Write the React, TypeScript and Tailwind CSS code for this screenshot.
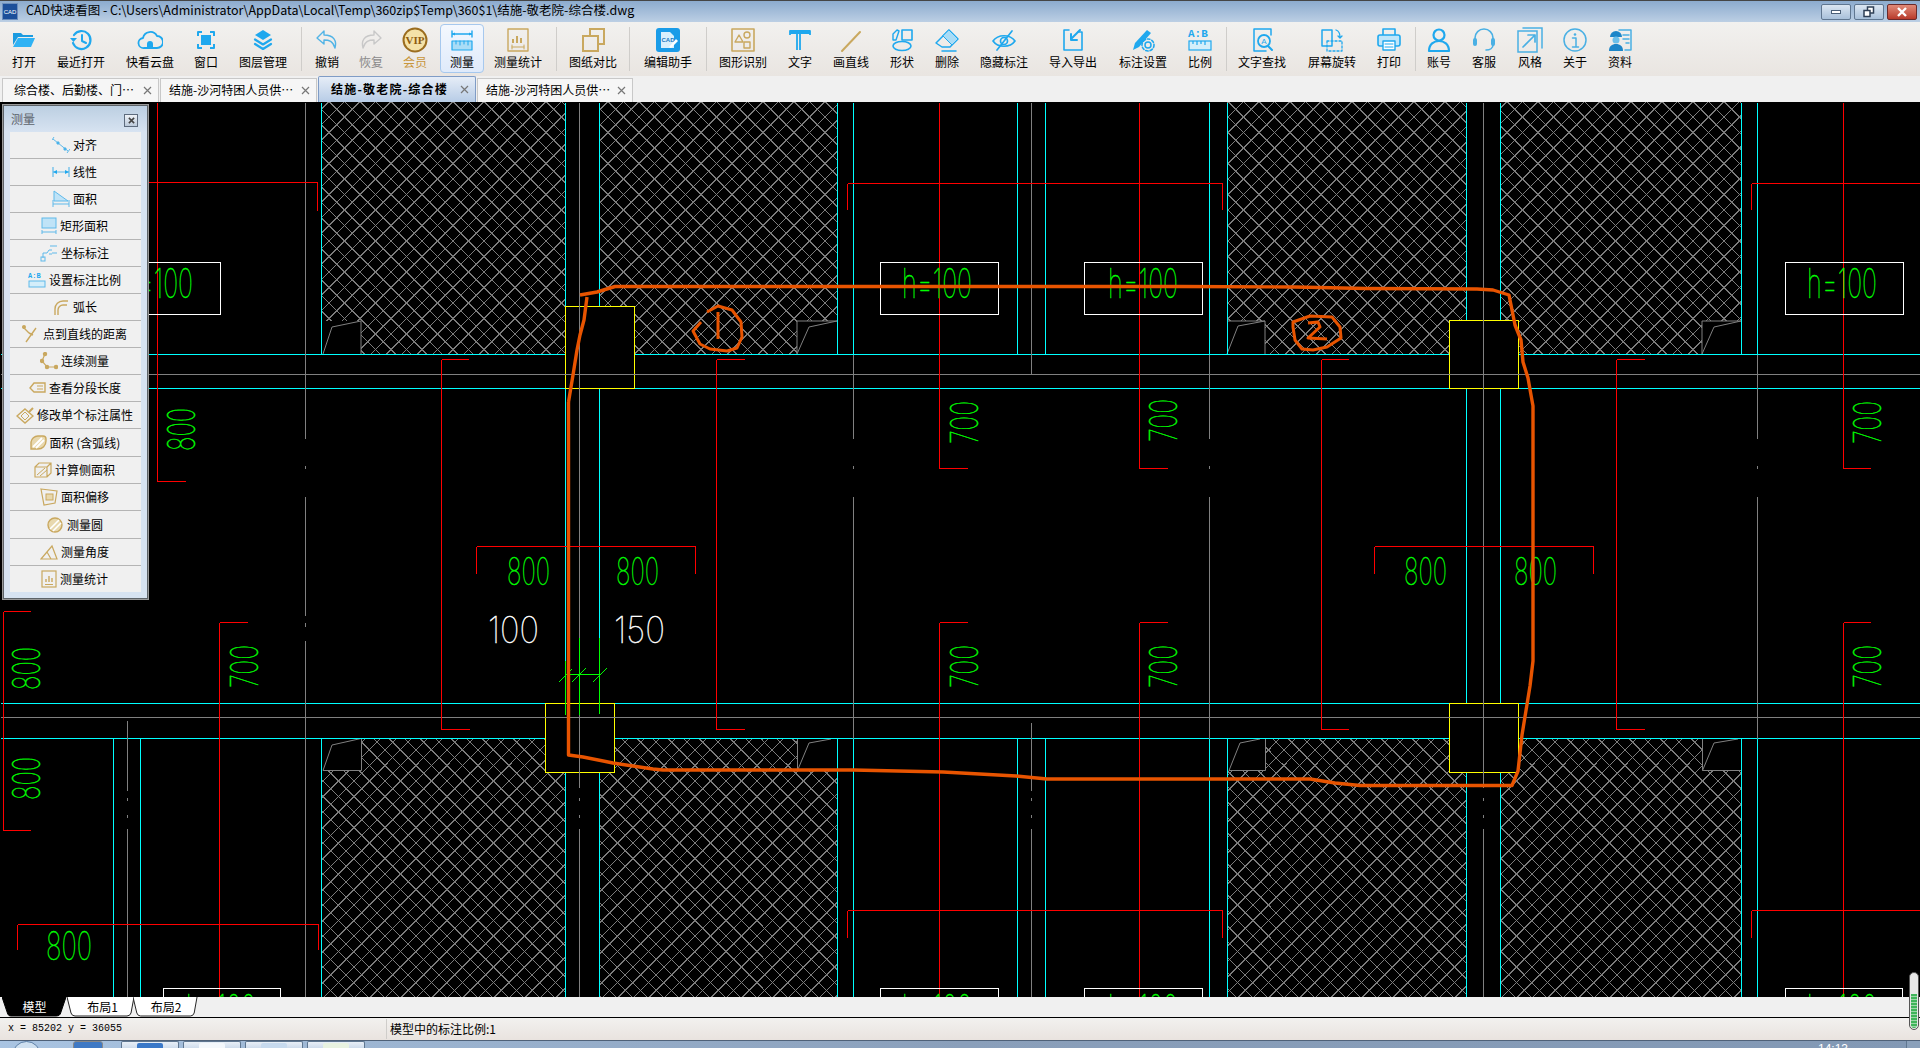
import React from "react";

const B = "#1fa8ee";
const G = "#c9a85f";

type IcProps = { s?: number; children: React.ReactNode; vb?: string };
const Ic = ({ s = 26, vb = "0 0 26 26", children }: IcProps) => (
  <svg width={s} height={s} viewBox={vb} fill="none" stroke={B} strokeWidth={1.6} strokeLinecap="round" strokeLinejoin="round">
    {children}
  </svg>
);

const icons: Record<string, React.ReactNode> = {
  open: (
    <Ic>
      <path d="M2 18V6h8l2 2h10v2H7z" fill="#1b9be0" stroke="none" />
      <path d="M2 20 7 11h17l-4 9z" fill="#2fb2f4" stroke="none" />
    </Ic>
  ),
  recent: (
    <Ic>
      <path d="M6 8a9 9 0 1 1-1 8" strokeWidth={2.2} />
      <path d="M2 11h7l-3.500 4z" fill={B} stroke="none" />
      <path d="M14 8v6l4 2" strokeWidth={2} />
    </Ic>
  ),
  cloud: (
    <Ic>
      <path d="M7 21a5 5 0 0 1-1-10 7.500 7.500 0 0 1 14-2 6 6 0 0 1 0 12z" strokeWidth={1.8} />
      <path d="M10 21v-4a3 3 0 0 1 6 0v4z" fill={B} stroke="none" />
    </Ic>
  ),
  window: (
    <Ic>
      <path d="M5 9V5h4M17 5h4v4M21 17v4h-4M9 21H5v-4" strokeWidth={2} strokeLinecap="butt" />
      <rect x="8" y="8" width="10" height="10" fill={B} stroke="none" />
    </Ic>
  ),
  layers: (
    <Ic>
      <path d="M13 3 21 8l-8 5-8-5z" fill={B} stroke="none" />
      <path d="M5 12.500l8 5 8-5M5 17l8 5 8-5" strokeWidth={2.200} />
    </Ic>
  ),
  undo: (
    <Ic>
      <path d="M10 4 3 11l7 6v-4c5 0 9 1 11 8 2-7-1-13-11-13z" stroke="#52b4e6" strokeWidth={1.4} />
    </Ic>
  ),
  redo: (
    <Ic>
      <path d="M16 4l7 7-7 6v-4C11 13 7 14 5 21 3 14 6 8 16 8z" stroke="#c8c8c8" strokeWidth={1.4} />
    </Ic>
  ),
  vip: (
    <svg width="26" height="26" viewBox="0 0 26 26">
      <circle cx="13" cy="13" r="11.500" fill="#f4e2a8" stroke="#9b6d1f" strokeWidth="2" />
      <text x="13" y="17" textAnchor="middle" fontFamily="Liberation Serif" fontWeight="700" fontSize="11" fill="#8d5c10">VIP</text>
    </svg>
  ),
  measure: (
    <Ic>
      <path d="M3 7h20M3 4v6M23 4v6" strokeWidth={1.4} />
      <path d="M3 7l3-1.500v3zM23 7l-3-1.500v3z" fill={B} stroke="none" />
      <rect x="3" y="14" width="20" height="9" fill="#a9dcf6" strokeWidth={1.2} />
      <path d="M7 14v3M11 14v4M15 14v3M19 14v4" strokeWidth={1} />
    </Ic>
  ),
  mstat: (
    <Ic>
      <g stroke={G}>
        <rect x="3" y="2" width="20" height="22" strokeWidth={1.4} />
        <path d="M8 12v4M12 9v7M16 11v5" strokeWidth={2} strokeLinecap="butt" />
        <path d="M7 20h12M7 18v4M19 18v4" strokeWidth={1} />
      </g>
    </Ic>
  ),
  compare: (
    <Ic>
      <g stroke={G} strokeWidth={2} strokeLinecap="butt" strokeLinejoin="miter">
        <path d="M10 9V2h14v15h-6" />
        <rect x="3" y="9" width="15" height="15" />
      </g>
    </Ic>
  ),
  helper: (
    <svg width="26" height="26" viewBox="0 0 26 26">
      <rect x="1" y="1" width="24" height="24" rx="3" fill="#1a9ce8" />
      <path d="M6 5h9l4 4v12H6z" fill="#d9f0fc" />
      <text x="6.500" y="15" fontFamily="Liberation Sans" fontWeight="700" fontSize="6" fill="#1a78c0">CAD</text>
      <path d="M14 20l7-8 2 2-7 7z" fill="#fff" />
    </svg>
  ),
  recog: (
    <Ic>
      <g stroke={G} strokeWidth={1.4}>
        <rect x="2" y="2" width="22" height="22" strokeWidth={1.6} />
        <path d="M9 8l4 7H5z" />
        <circle cx="17" cy="8" r="3" />
        <rect x="14" y="15" width="6" height="6" />
      </g>
    </Ic>
  ),
  text: (
    <Ic>
      <path d="M3 8V4h20v4M3 6h20M13 6v17M10 6v17" strokeWidth={1.800} strokeLinecap="butt" />
    </Ic>
  ),
  line: (
    <Ic>
      <path d="M4 24 22 5" stroke={G} strokeWidth={2} />
    </Ic>
  ),
  shape: (
    <Ic>
      <rect x="13" y="3" width="10" height="10" strokeWidth={1.600} />
      <ellipse cx="13" cy="19" rx="9" ry="4.500" strokeWidth={1.600} />
      <path d="M4 13V7l4-4 2 1-3 9z" strokeWidth={1.400} />
    </Ic>
  ),
  eraser: (
    <Ic>
      <path d="M2 16 15 3l9 9-8 8H8z" strokeWidth={1.500} />
      <path d="M9 9l9 9 6-6-9-9z" fill="#a9dcf6" strokeWidth={1} />
      <path d="M8 24h14" strokeWidth={1.500} />
    </Ic>
  ),
  eye: (
    <Ic>
      <path d="M2 14c5-7 17-7 22 0-5 7-17 7-22 0z" strokeWidth={1.700} />
      <circle cx="13" cy="14" r="3.500" strokeWidth={1.700} />
      <path d="M6 23 21 4" strokeWidth={1.700} />
    </Ic>
  ),
  imp: (
    <Ic>
      <path d="M9 3H4v20h18V5h-4" strokeWidth={1.600} />
      <path d="M20 3 11 12M11 7v6h6" strokeWidth={2} />
    </Ic>
  ),
  dimset: (
    <Ic>
      <path d="M3 23l2-7L17 3l4 3L9 20z" fill={B} stroke="none" />
      <circle cx="18" cy="18" r="3" strokeWidth={1.500} />
      <circle cx="18" cy="18" r="6" strokeWidth={1.600} strokeDasharray="2.500 2" />
    </Ic>
  ),
  ratio: (
    <svg width="26" height="26" viewBox="0 0 26 26">
      <text x="1" y="10" fontFamily="Liberation Mono" fontWeight="700" fontSize="11" fill={B}>A:B</text>
      <g fill="none" stroke={B} strokeWidth="1.200">
        <rect x="2" y="14" width="22" height="9" fill="#d4eefa" />
        <path d="M6 14v3M10 14v4M14 14v3M18 14v4" />
      </g>
    </svg>
  ),
  find: (
    <Ic>
      <path d="M5 2h17v6M5 2v22h12" strokeWidth={1.500} />
      <circle cx="15" cy="14" r="6" strokeWidth={1.800} />
      <path d="M19 19l4 4" strokeWidth={2} />
      <text x="12.200" y="17" fontFamily="Liberation Sans" fontSize="8" fill={B} stroke="none">A</text>
    </Ic>
  ),
  rotate: (
    <Ic>
      <rect x="3" y="3" width="10" height="16" strokeWidth={1.500} />
      <rect x="8" y="14" width="15" height="10" strokeWidth={1.300} strokeDasharray="2 2" />
      <path d="M17 3c3 1 4 3 4 7M19 9l2 2 2-2" strokeWidth={1.300} />
    </Ic>
  ),
  print: (
    <Ic>
      <path d="M7 8V2h12v6" strokeWidth={1.600} />
      <rect x="2" y="8" width="22" height="11" rx="2" strokeWidth={1.600} fill="#bfe6fa" />
      <rect x="7" y="14" width="12" height="9" fill="#fff" strokeWidth={1.400} />
      <path d="M9 17h8M9 20h8" strokeWidth={1} />
    </Ic>
  ),
  user: (
    <Ic>
      <circle cx="13" cy="8" r="5.500" strokeWidth={2.200} />
      <path d="M3 24c0-7 5-10 10-10s10 3 10 10z" strokeWidth={2.200} />
    </Ic>
  ),
  head: (
    <Ic>
      <path d="M4 15V11a9 9 0 0 1 18 0v4M22 18c0 3-3 5-7 5" stroke="#4ab0e4" strokeWidth={1.600} />
      <rect x="2" y="11" width="4" height="8" rx="2" fill="#4ab0e4" stroke="none" />
      <rect x="20" y="11" width="4" height="8" rx="2" fill="#4ab0e4" stroke="none" />
    </Ic>
  ),
  style: (
    <Ic>
      <path d="M6 1h19v20M1 4h19v21H1z" stroke="#4ab0e4" strokeWidth={1.500} strokeLinejoin="miter" />
      <path d="M6 20 18 8M11 8h7v7" stroke="#4ab0e4" strokeWidth={1.700} />
    </Ic>
  ),
  about: (
    <Ic>
      <circle cx="13" cy="13" r="11" stroke="#4ab0e4" strokeWidth={1.500} />
      <circle cx="13" cy="7.500" r="1.300" fill="#4ab0e4" stroke="none" />
      <path d="M10.500 11H14v8M10.500 20h6" stroke="#4ab0e4" strokeWidth={1.500} />
    </Ic>
  ),
  data: (
    <Ic>
      <path d="M12 3h12v20h-6" stroke="#4ab0e4" strokeWidth={1.500} />
      <path d="M16 8h6M16 12h6M19 16h3" stroke="#4ab0e4" strokeWidth={1.500} />
      <path d="M3 10a6 6 0 0 1 12 0z" fill="#1d86c8" stroke="none" />
      <circle cx="9" cy="13" r="3.500" fill="#6cc0ea" stroke="none" />
      <path d="M2 24c0-5 3-7 7-7s7 2 7 7z" fill="#1d86c8" stroke="none" />
    </Ic>
  ),
};

type Tool = { label: string; w: string; icon: string; sep?: string; active?: boolean; color?: string };
const tools: Tool[] = [
  { label: "打开", w: "w-[48px]", icon: "open" },
  { label: "最近打开", w: "w-[66px]", icon: "recent" },
  { label: "快看云盘", w: "w-[72px]", icon: "cloud" },
  { label: "窗口", w: "w-[40px]", icon: "window" },
  { label: "图层管理", w: "w-[74px]", icon: "layers", sep: "ml-[1px]" },
  { label: "撤销", w: "w-[50px]", icon: "undo" },
  { label: "恢复", w: "w-[38px]", icon: "redo", color: "text-[#8a8a8a]" },
  { label: "会员", w: "w-[50px]", icon: "vip", color: "text-[#c8963c]" },
  { label: "测量", w: "w-[44px]", icon: "measure", active: true },
  { label: "测量统计", w: "w-[68px]", icon: "mstat", sep: "ml-[4px]" },
  { label: "图纸对比", w: "w-[72px]", icon: "compare", sep: "ml-[0px]" },
  { label: "编辑助手", w: "w-[76px]", icon: "helper", sep: "ml-[0px]" },
  { label: "图形识别", w: "w-[72px]", icon: "recog" },
  { label: "文字", w: "w-[42px]", icon: "text" },
  { label: "画直线", w: "w-[60px]", icon: "line" },
  { label: "形状", w: "w-[42px]", icon: "shape" },
  { label: "删除", w: "w-[48px]", icon: "eraser" },
  { label: "隐藏标注", w: "w-[66px]", icon: "eye" },
  { label: "导入导出", w: "w-[72px]", icon: "imp" },
  { label: "标注设置", w: "w-[68px]", icon: "dimset" },
  { label: "比例", w: "w-[46px]", icon: "ratio", sep: "ml-[3px]" },
  { label: "文字查找", w: "w-[70px]", icon: "find" },
  { label: "屏幕旋转", w: "w-[70px]", icon: "rotate" },
  { label: "打印", w: "w-[44px]", icon: "print", sep: "ml-[4px]" },
  { label: "账号", w: "w-[46px]", icon: "user" },
  { label: "客服", w: "w-[44px]", icon: "head" },
  { label: "风格", w: "w-[48px]", icon: "style" },
  { label: "关于", w: "w-[42px]", icon: "about" },
  { label: "资料", w: "w-[48px]", icon: "data" },
];

const cjk = "font-['Noto_Sans_CJK_SC',sans-serif]";

const Toolbar = () => (
  <div className="flex h-[54px] items-stretch bg-gradient-to-b from-[#f2f1ef] to-[#e9e5e1]">
    {tools.map((t) => (
      <React.Fragment key={t.label}>
        <div className={`${t.w} flex flex-col items-center pt-[5px] shrink-0 relative`}>
          {t.active && (
            <div className="absolute left-0 right-0 top-[2px] bottom-[3px] rounded-[4px] border border-[#a6c8ee] bg-gradient-to-b from-[#f4f8fe] to-[#dfeafa]" />
          )}
          <div className="relative h-[26px] flex items-center justify-center">{icons[t.icon]}</div>
          <div className={`relative mt-[1px] leading-[16px] text-[12px] whitespace-nowrap ${t.color ?? "text-black"}`}>{t.label}</div>
        </div>
        {t.sep && <div className={`${t.sep} w-[1px] my-[5px] bg-[#cfcdca] shrink-0`} />}
      </React.Fragment>
    ))}
  </div>
);

const WinBtn = ({ close, children }: { close?: boolean; children: React.ReactNode }) => (
  <div
    className={`w-[30px] h-[16px] rounded-[2px] border flex items-center justify-center ${
      close
        ? "border-[#6b2a2a] bg-gradient-to-b from-[#e08a78] to-[#b8392a]"
        : "border-[#5f7690] bg-gradient-to-b from-[#dbe6f2] to-[#a8c0da]"
    }`}
  >
    {children}
  </div>
);

const TitleBar = () => (
  <div className="h-[22px] border-t-[1px] border-[#454545] bg-gradient-to-b from-[#8cabce] to-[#bccfe4] flex items-center pl-[2px] pr-[3px]">
    <div className="w-[16px] h-[17px] bg-[#1c4f9a] border border-[#6d8fbd] flex items-center justify-center shrink-0">
      <span className="text-[6px] leading-none text-white font-['Liberation_Sans',sans-serif]">CAD</span>
    </div>
    <span className="ml-[8px] text-[12.5px] leading-none text-black whitespace-nowrap -mt-[2px]">
      CAD快速看图 - C:\Users\Administrator\AppData\Local\Temp\360zip$Temp\360$1\结施-敬老院-综合楼.dwg
    </span>
    <div className="ml-auto flex gap-[3px]">
      <WinBtn>
        <div className="w-[10px] h-[4px] bg-white border border-[#4a5f78]" />
      </WinBtn>
      <WinBtn>
        <svg width="12" height="12" viewBox="0 0 12 12" fill="none" stroke="#2e3f55" strokeWidth="1.500">
          <rect x="4.500" y="1" width="6" height="6" fill="#fff" />
          <rect x="1" y="4.500" width="6" height="6" fill="#fff" />
        </svg>
      </WinBtn>
      <WinBtn close>
        <svg width="12" height="10" viewBox="0 0 12 10" fill="none" stroke="#fff" strokeWidth="2.400">
          <path d="M2 1l8 8M10 1 2 9" />
        </svg>
      </WinBtn>
    </div>
  </div>
);

const tabs = [
  { t: "综合楼、后勤楼、门…", w: "w-[157px]", pl: "pl-[11px]" },
  { t: "结施-沙河特困人员供…", w: "w-[157px]", pl: "pl-[8px]" },
  { t: "结施-敬老院-综合楼", w: "w-[158px]", pl: "pl-[12px]", active: true },
  { t: "结施-沙河特困人员供…", w: "w-[156px]", pl: "pl-[8px]" },
];

const TabStrip = () => (
  <div className="h-[26px] bg-[#f0f0f0] flex items-end pl-[2px] gap-[1px]">
    {tabs.map((t, i) => (
      <div
        key={i}
        className={`${t.w} ${t.pl} flex items-center justify-between pr-[6px] pb-[1px] border border-b-0 ${
          t.active
            ? "h-[26px] rounded-t-[2px] border-[#7f9cc6] bg-gradient-to-b from-[#e6edf7] to-[#b7cce6] font-bold tracking-[1.2px]"
            : "h-[24px] border-[#c8c8c8] bg-[#f6f6f6]"
        }`}
      >
        <span className="text-[12px] leading-none text-black whitespace-nowrap">{t.t}</span>
        <svg width="9" height="9" viewBox="0 0 9 9" stroke="#777" strokeWidth="1.200">
          <path d="M1 1l7 7M8 1 1 8" />
        </svg>
      </div>
    ))}
  </div>
);

/* ---------- CAD drawing ---------- */
type Seg = number[];
const hatches = [
  [321, 102, 244, 252, 0],
  [599, 102, 238, 252, 0],
  [1227, 102, 239, 252, 0],
  [1500, 102, 241, 252, 0],
  [321, 738, 244, 259, 1],
  [599, 738, 238, 259, 1],
  [1227, 738, 239, 259, 1],
  [1500, 738, 241, 259, 1],
];
const PITCH = 15.5;
/* A drawn cross-hatch: two families of diagonals through a known node, cut to the rectangle by a clip path. */
const Hatch = ({ h, id }: { h: number[]; id: string }) => {
  const [x, y, w, ht, lower] = h;
  const nx = lower ? 1268.3 : 336.7;
  const ny = lower ? 750 : 109.3;
  const lines: React.ReactNode[] = [];
  const a0 = nx - ny;
  const b0 = nx + ny;
  const aMin = x - (y + ht);
  const aMax = x + w - y;
  const bMin = x + y;
  const bMax = x + w + y + ht;
  for (let k = Math.floor((aMin - a0) / PITCH); k <= Math.ceil((aMax - a0) / PITCH); k++) {
    const a = a0 + k * PITCH;
    lines.push(<line key={`a${k}`} x1={y + a} y1={y} x2={y + ht + a} y2={y + ht} />);
  }
  for (let k = Math.floor((bMin - b0) / PITCH); k <= Math.ceil((bMax - b0) / PITCH); k++) {
    const b = b0 + k * PITCH;
    lines.push(<line key={`b${k}`} x1={b - y} y1={y} x2={b - y - ht} y2={y + ht} />);
  }
  return (
    <g>
      <clipPath id={id}>
        <rect x={x} y={y} width={w} height={ht} />
      </clipPath>
      <g clipPath={`url(#${id})`} stroke="#7c7c7c" strokeWidth="1" shapeRendering="crispEdges">
        {lines}
      </g>
    </g>
  );
};

const cyan: Seg[] = [
  [321, 102, 321, 354], [565, 102, 565, 997], [599, 102, 599, 997], [837, 102, 837, 354], [853, 102, 853, 354],
  [1017, 102, 1017, 354], [1045, 102, 1045, 354], [1209, 102, 1209, 354], [1227, 102, 1227, 354],
  [1466, 102, 1466, 997], [1500, 102, 1500, 997], [1741, 102, 1741, 354], [1757, 102, 1757, 354],
  [321, 738, 321, 997], [837, 738, 837, 997], [853, 738, 853, 997], [1017, 738, 1017, 997], [1045, 738, 1045, 997],
  [1209, 738, 1209, 997], [1227, 738, 1227, 997], [1741, 738, 1741, 997], [1757, 738, 1757, 997],
  [113, 738, 113, 997], [140, 738, 140, 997],
  [0, 354, 1920, 354], [0, 388, 1920, 388], [0, 703, 1920, 703], [0, 738, 1920, 738],
];
const gray: Seg[] = [
  [0, 374, 1920, 374], [0, 717, 1920, 717],
  [305, 102, 305, 438], [305, 465, 305, 468], [305, 496, 305, 615], [305, 622, 305, 626], [305, 640, 305, 997],
  [579, 102, 579, 787], [579, 797, 579, 800], [579, 814, 579, 817], [579, 828, 579, 997],
  [853, 354, 853, 438], [853, 465, 853, 468], [853, 496, 853, 738],
  [1031, 102, 1031, 374], [1031, 722, 1031, 790], [1031, 797, 1031, 800], [1031, 814, 1031, 817], [1031, 828, 1031, 997],
  [1209, 354, 1209, 438], [1209, 465, 1209, 468], [1209, 496, 1209, 738],
  [1483, 102, 1483, 787], [1483, 797, 1483, 800], [1483, 814, 1483, 817], [1483, 828, 1483, 997],
  [1757, 354, 1757, 438], [1757, 465, 1757, 468], [1757, 496, 1757, 738],
  [127, 720, 127, 790], [127, 797, 127, 800], [127, 814, 127, 817], [127, 828, 127, 997],
];
const red: Seg[] = [
  [148, 182, 317, 182], [317, 182, 317, 210],
  [157, 102, 157, 481], [157, 481, 185, 481],
  [847, 183, 1222, 183], [847, 183, 847, 209], [1222, 183, 1222, 209],
  [939, 102, 939, 468], [939, 468, 967, 468],
  [1139, 102, 1139, 468], [1139, 468, 1167, 468],
  [1751, 183, 1920, 183], [1751, 183, 1751, 209],
  [1843, 102, 1843, 468], [1843, 468, 1870, 468],
  [441, 359, 441, 729], [441, 359, 468, 359], [441, 729, 469, 729],
  [716, 359, 716, 729], [716, 359, 744, 359], [716, 729, 744, 729],
  [1321, 359, 1321, 729], [1321, 359, 1348, 359], [1321, 729, 1348, 729],
  [1616, 359, 1616, 729], [1616, 359, 1644, 359], [1616, 729, 1644, 729],
  [476, 546, 695, 546], [476, 546, 476, 573], [695, 546, 695, 573],
  [1374, 546, 1593, 546], [1374, 546, 1374, 573], [1593, 546, 1593, 573],
  [219, 622, 219, 997], [219, 622, 247, 622],
  [939, 622, 939, 997], [939, 622, 967, 622],
  [1139, 622, 1139, 997], [1139, 622, 1167, 622],
  [1843, 622, 1843, 997], [1843, 622, 1870, 622],
  [3, 611, 3, 830], [3, 611, 30, 611], [3, 830, 30, 830],
  [17, 924, 318, 924], [17, 924, 17, 949], [318, 924, 318, 949],
  [847, 910, 1222, 910], [847, 910, 847, 937], [1222, 910, 1222, 937],
  [1751, 910, 1920, 910], [1751, 910, 1751, 937],
];
const whiteBoxes = [
  [100, 262, 120, 52], [880, 262, 118, 52], [1084, 262, 118, 52], [1785, 262, 118, 52],
  [163, 988, 117, 60], [880, 988, 118, 60], [1084, 988, 118, 60], [1785, 988, 117, 60],
];
const yellow = [
  [565, 306, 69, 82],
  [1449, 320, 69, 68],
  [545, 703, 69, 69],
  [1449, 703, 69, 69],
];
const doors = [
  "M361 321H321V354H361Z|M323 354 332 327 361 321M361 321V354",
  "M797 321H837V354H797Z|M797 354V321H837M797 354 809 327 837 321",
  "M1227 321H1265V354H1227Z|M1227 321H1265V354M1227 354 1238 326 1265 321",
  "M1702 321H1741V354H1702Z|M1702 354V321H1741M1702 354 1714 327 1741 321",
  "M321 738H361V771H321Z|M323 770.500 332 745 361 738.500M361.500 738V770.500H323",
  "M797 738H837V771H797Z|M797.500 770.500V738M797.500 770.500 809 743 831 739M797.500 770.500H837",
  "M1227 738H1265V771H1227Z|M1229 770.500 1240 743 1260 739M1265.500 738V770.500H1229",
  "M1702 738H1741V771H1702Z|M1702.500 770.500V738M1702.500 770.500 1714 743 1738 739M1702.500 770.500H1741",
];

const CadText = ({ x, y, w, h, text, color = "#00ff00", rot }: { x: number; y: number; w: number; h: number; text: string; color?: string; rot?: boolean }) => (
  <text
    x={x}
    y={y}
    fontSize={h / 0.727}
    fontFamily="Inter, 'Liberation Sans', sans-serif"
    fontWeight={100}
    fill={color}
    stroke={color}
    strokeWidth={0.45}
    textLength={w}
    lengthAdjust="spacingAndGlyphs"
    transform={rot ? `rotate(-90 ${x} ${y})` : undefined}
  >
    {text}
  </text>
);

const Lines = ({ segs, color, w = 1 }: { segs: Seg[]; color: string; w?: number }) => (
  <g stroke={color} strokeWidth={w} shapeRendering="crispEdges">
    {segs.map((s, i) => (
      <line key={i} x1={s[0] + 0.5} y1={s[1] + 0.5} x2={s[2] + 0.5} y2={s[3] + 0.5} />
    ))}
  </g>
);

const orange = "#e85400";

const Drawing = () => (
  <svg className="absolute inset-0" width="1920" height="895" viewBox="0 102 1920 895">
    <rect x="0" y="102" width="1920" height="895" fill="#000" />
    {hatches.map((h, i) => (
      <Hatch key={i} h={h} id={`hatch${i}`} />
    ))}
    {doors.map((d, i) => {
      const [f, s] = d.split("|");
      return (
        <g key={i}>
          <path d={f} fill="#000" />
          <path d={s} fill="none" stroke="#808080" />
        </g>
      );
    })}
    <Lines segs={cyan} color="#00ffff" />
    {yellow.map((b, i) => (
      <rect key={i} x={b[0] + 0.5} y={b[1] + 0.5} width={b[2]} height={b[3]} fill="#000" stroke="#ffff00" shapeRendering="crispEdges" />
    ))}
    <Lines segs={gray} color="#808080" />
    <Lines
      segs={[
        [565, 660, 565, 714], [579, 637, 579, 714], [599, 637, 599, 713], [565, 674, 599, 674],
      ]}
      color="#00ff00"
    />
    <path d="M559 682 572 669M572 682 586 668M593 682 607 668" stroke="#00ff00" fill="none" />
    <Lines segs={red} color="#ff0000" />
    {whiteBoxes.map((b, i) => (
      <rect key={i} x={b[0] + 0.5} y={b[1] + 0.5} width={b[2]} height={b[3]} fill="none" stroke="#ffffff" shapeRendering="crispEdges" />
    ))}

    <CadText x={123} y={298} w={70} h={30} text="h=100" />
    <CadText x={902} y={298} w={70} h={30} text="h=100" />
    <CadText x={1108} y={298} w={70} h={30} text="h=100" />
    <CadText x={1807} y={298} w={70} h={30} text="h=100" />
    <CadText x={186} y={1024} w={70} h={30} text="h=100" />
    <CadText x={902} y={1024} w={70} h={30} text="h=100" />
    <CadText x={1108} y={1024} w={70} h={30} text="h=100" />
    <CadText x={1807} y={1024} w={70} h={30} text="h=100" />

    <CadText x={507} y={585} w={43} h={28} text="800" />
    <CadText x={616} y={585} w={43} h={28} text="800" />
    <CadText x={1404} y={585} w={43} h={28} text="800" />
    <CadText x={1514} y={585} w={43} h={28} text="800" />
    <CadText x={46} y={960} w={46} h={29} text="800" />

    <CadText x={488} y={643} w={51} h={27} text="100" color="#ffffff" />
    <CadText x={614} y={643} w={51} h={27} text="150" color="#ffffff" />

    <CadText x={195} y={451} w={43} h={28} text="800" rot />
    <CadText x={978} y={444} w={43} h={28} text="700" rot />
    <CadText x={1177} y={442} w={43} h={28} text="700" rot />
    <CadText x={1881} y={444} w={43} h={28} text="700" rot />
    <CadText x={258} y={688} w={43} h={28} text="700" rot />
    <CadText x={978} y={688} w={43} h={28} text="700" rot />
    <CadText x={1177} y={688} w={43} h={28} text="700" rot />
    <CadText x={1881} y={688} w={43} h={28} text="700" rot />
    <CadText x={40} y={690} w={43} h={28} text="800" rot />
    <CadText x={40} y={800} w={43} h={28} text="800" rot />

    <g fill="none" stroke={orange} strokeLinejoin="round">
      <path
        strokeWidth="3.400"
        d="M568.500 402V755L583 757 613 763 653 769 663 770H853L943 772 1016 776 1047 779H1310L1335 783 1360 785.500H1512L1518 771 1522 735 1530 686 1533 661V406L1531 395 1528 378 1523 362 1521 340 1515 325 1509 295 1493 290 1477 289 1365 288.500 1295 287 1180 286.500H615L597 292 580 295"
      />
      <path strokeWidth="3.400" d="M587 297 584 320 580 335 577 350 573 375 568.500 402" />
      <path strokeWidth="3" d="M707 312 718 306 732 310 741 322 742 337 737 348 727 351 710 349 700 344 693 331 701 322" />
      <path strokeWidth="3" d="M718 312V339" />
      <path strokeWidth="3" d="M1293 322 1310 316 1332 317 1340 327 1341 338 1327 347 1313 350 1302 349 1295 340 1293 327Z" />
      <path strokeWidth="3" d="M1308 323 1318 322 1320 327 1308 338 1327 339" />
    </g>
  </svg>
);

/* ---------- measure panel ---------- */
const PI = ({ children, w = 18 }: { children: React.ReactNode; w?: number }) => (
  <svg width={w} height="18" viewBox={`0 0 ${w} 18`} fill="none" stroke="#5fb9ea" strokeWidth="1" className="shrink-0">
    {children}
  </svg>
);
const Bg = ({ children, w = 18 }: { children: React.ReactNode; w?: number }) => (
  <svg width={w} height="18" viewBox={`0 0 ${w} 18`} fill="none" stroke="#c9a85f" strokeWidth="1.400" className="shrink-0">
    {children}
  </svg>
);
const rows: { t: string; h: string; i: React.ReactNode }[] = [
  { t: "对齐", h: "h-[27px]", i: <PI><path d="M1 3 16 15M2 1 0 4M15 17 18 13" /><circle cx="6" cy="7" r="1.200" fill="#1fa8ee" /><circle cx="13" cy="13" r="1.200" fill="#1fa8ee" /></PI> },
  { t: "线性", h: "h-[27px]", i: <PI><path d="M1 4v10M17 4v10M1 9h16" strokeWidth="1.200" /><path d="M1 9l4-2v4zM17 9l-4-2v4z" fill="#1fa8ee" stroke="none" /></PI> },
  { t: "面积", h: "h-[27px]", i: <PI><path d="M2 11V1l14 10z" fill="#bfe3f7" /><path d="M1 10v7M17 10v7M1 14h16" /></PI> },
  { t: "矩形面积", h: "h-[27px]", i: <PI w={16}><rect x="1" y="1" width="14" height="10" fill="#bfe3f7" /><path d="M1 15h14M1 13v4M15 13v4" /></PI> },
  { t: "坐标标注", h: "h-[27px]", i: <PI><path d="M3 14V9h4l2-3h3M9 10h3" /><rect x="1" y="13" width="4" height="4" /><path d="M10 2h7M12 9h5" /></PI> },
  { t: "设置标注比例", h: "h-[27px]", i: <svg width="18" height="18" viewBox="0 0 18 18" className="shrink-0"><text x="0" y="7" fontFamily="Liberation Mono" fontWeight="700" fontSize="7" fill="#1fa8ee">A:B</text><rect x="1" y="10" width="16" height="6" fill="#d4eefa" stroke="#5fb9ea" /></svg> },
  { t: "弧长", h: "h-[27px]", i: <Bg><path d="M3 17V11a8 8 0 0 1 8-8h5M6 17v-5a5 5 0 0 1 5-5h4" /></Bg> },
  { t: "点到直线的距离", h: "h-[27px]", i: <Bg><path d="M1 2l6 6M14 3 4 17M7 8l4 2" /><circle cx="2" cy="2" r="1.300" fill="#c9a85f" /></Bg> },
  { t: "连续测量", h: "h-[27px]", i: <Bg><path d="M5 2 2 9l5 6h9" strokeWidth="1.200" /><circle cx="5" cy="2" r="1.500" fill="#c9a85f" /><circle cx="2" cy="9" r="1.500" fill="#c9a85f" /><circle cx="7" cy="15" r="1.500" fill="#c9a85f" /><circle cx="16" cy="15" r="1.500" fill="#c9a85f" /></Bg> },
  { t: "查看分段长度", h: "h-[27px]", i: <Bg><path d="M2 9l4-5h11v9H6z" /><path d="M9 7h6M9 10h6" strokeWidth="1" /></Bg> },
  { t: "修改单个标注属性", h: "h-[27px]", i: <Bg><path d="M9 3 17 10 9 17 1 10z" /><path d="M5 10l4-4 4 4-4 4z" strokeWidth="1" /><path d="M13 6l4-4" strokeWidth="2" /></Bg> },
  { t: "面积 (含弧线)", h: "h-[28px]", i: <Bg><path d="M2 15V8a7 7 0 0 1 7-6h5a3 3 0 0 1 3 3v2a8 8 0 0 1-8 8z" fill="#e8d8ae" /><path d="M4 13 13 4M7 14l8-8" strokeWidth="1.800" stroke="#fff" /></Bg> },
  { t: "计算侧面积", h: "h-[27px]", i: <Bg><path d="M1 6l4-4h12v10l-4 4H1zM1 6h12v10M13 6l4-4" strokeWidth="1.200" /><path d="M3 14l8-7M6 15l7-6" strokeWidth="1" /></Bg> },
  { t: "面积偏移", h: "h-[27px]", i: <Bg><path d="M1 1l16 2-2 12-11 2z" strokeWidth="1.200" /><rect x="6" y="6" width="7" height="6" fill="#e8d8ae" strokeWidth="1" /></Bg> },
  { t: "测量圆", h: "h-[28px]", i: <Bg><circle cx="9" cy="9" r="7" fill="#e8d8ae" /><path d="M4 13 13 4M7 15l8-8" stroke="#fff" strokeWidth="1.600" /></Bg> },
  { t: "测量角度", h: "h-[27px]", i: <Bg><path d="M1 16 12 3l5 13zM7 9l4 7" strokeWidth="1.200" /></Bg> },
  { t: "测量统计", h: "h-[26px]", i: <Bg w={16}><rect x="1" y="1" width="14" height="16" strokeWidth="1.200" /><path d="M5 9v3M8 6v6M11 8v4" /><path d="M4 14.500h8" strokeWidth="1" /></Bg> },
];

const Panel = () => (
  <div className="absolute left-[3px] top-[3px] w-[145px] h-[494px] bg-[#d7e3f1] border border-[#5d6368] flex flex-col items-stretch px-[6px] shadow-[0_0_0_1px_#9a9a9a]">
    <div className="h-[26px] -mx-[6px] px-[6px] bg-gradient-to-b from-[#bccfe2] to-[#d7e3f1] flex items-center justify-between shrink-0">
      <span className="text-[12px] leading-none text-[#5c636b] ml-[1px]">测量</span>
      <div className="w-[14px] h-[13px] mr-[3px] mt-[2px] border border-[#5d6b7d] bg-gradient-to-b from-[#eef2f7] to-[#bccadb] flex items-center justify-center">
        <svg width="7" height="7" viewBox="0 0 8 8" stroke="#444" strokeWidth="1.800">
          <path d="M1 1l6 6M7 1 1 7" />
        </svg>
      </div>
    </div>
    <div className="flex flex-col pr-[1px] -mr-[1px]">
      {rows.map((r, i) => (
        <div
          key={i}
          className={`${r.h} bg-[#f0f0f0] flex items-center justify-center gap-[3px] pr-[2px] ${i < rows.length - 1 ? "border-b border-[#b4b4b4]" : ""}`}
        >
          {r.i}
          <span className="text-[12px] leading-none text-black whitespace-nowrap">{r.t}</span>
        </div>
      ))}
    </div>
  </div>
);

/* ---------- bottom ---------- */
const LayoutTab = ({ w, pl, d, fill, stroke, text, white }: { w: string; pl?: string; d: string; fill: string; stroke: string; text: string; white?: boolean }) => (
  <div className={`${w} ${pl ?? ""} relative h-[20px] flex items-center justify-center shrink-0`}>
    <svg className="absolute inset-0" width="100%" height="20" viewBox="0 0 68 20" preserveAspectRatio="none">
      <path d={d} fill={fill} stroke={stroke} />
    </svg>
    <span className={`relative text-[12px] leading-none ${white ? "text-white" : "text-black"}`}>{text}</span>
  </div>
);

const Gauge = () => (
  <div className="absolute left-[1909px] top-[972px] w-[10px] h-[58px] rounded-[5px] border border-[#555] bg-[#e8e8e8] flex flex-col justify-end items-stretch p-[1px] overflow-hidden">
    <div className="h-[34px] rounded-b-[4px] bg-[repeating-linear-gradient(to_bottom,#3fb45a_0px,#3fb45a_2px,#9bd8a8_2px,#9bd8a8_3px)]" />
  </div>
);

const TaskBtn = ({ c }: { c: string }) => (
  <div className="w-[58px] h-[8px] rounded-t-[2px] border border-b-0 border-[#5f7690] bg-gradient-to-b from-[#e8eff7] to-[#cbd9ea] flex justify-center shrink-0">
    <div className={`w-[26px] h-[8px] mt-[1px] rounded-t-[2px] ${c}`} />
  </div>
);

export default function App() {
  return (
    <div className={`relative w-[1920px] h-[1048px] overflow-hidden flex flex-col bg-[#f0f0f0] ${cjk}`}>
      <TitleBar />
      <Toolbar />
      <TabStrip />
      <div className="relative h-[895px] overflow-hidden bg-black shrink-0">
        <Drawing />
        <Panel />
      </div>
      <div className="h-[20px] bg-[#f0f0f0] flex items-start pl-[2px] shrink-0">
        <LayoutTab w="w-[65px]" d="M0 0 6 17Q7 19 9 19H57Q60 19 61 17L67 0Z" fill="#000" stroke="#000" text="模型" white />
        <LayoutTab w="w-[68px]" pl="pl-[3px]" d="M0 0 4 16Q5 19 8 19H60Q63 19 64 16L67 0" fill="#fff" stroke="#222" text="布局1" />
        <div className="-ml-[2px]">
          <LayoutTab w="w-[65px]" pl="pl-[1px]" d="M0 0 4 16Q5 19 8 19H60Q63 19 64 16L67 0" fill="#fff" stroke="#222" text="布局2" />
        </div>
      </div>
      <div className="h-[1px] bg-black shrink-0" />
      <div className="h-[22px] bg-gradient-to-b from-[#f2f1ef] to-[#e9e3df] flex items-center shrink-0">
        <span className="w-[386px] pl-[8px] text-[10px] leading-none font-['Liberation_Mono',monospace] whitespace-pre text-black">x = 85202 y = 36055</span>
        <div className="w-[1px] h-[20px] bg-[#cfcdca]" />
        <span className="ml-[3px] text-[12px] leading-none text-black">模型中的标注比例:1</span>
      </div>
      <div className="h-[8px] border-t border-[#4f6178] bg-gradient-to-r from-[#a9c4e2] via-[#8a9fba] to-[#8298b4] flex items-start relative overflow-hidden shrink-0">
        <div className="ml-[12px] w-[29px] h-[29px] rounded-full border border-[#5b7ea6] bg-[#cfe0f0] shrink-0" />
        <div className="ml-[32px] w-[30px] h-[8px] rounded-t-[3px] bg-[#3f79c4] border border-[#888] shrink-0" />
        <div className="ml-[18px] flex gap-[4px]">
          <TaskBtn c="bg-[#3a78c8]" />
          <TaskBtn c="bg-[#f4f8fc]" />
          <TaskBtn c="bg-[#c7daee]" />
          <TaskBtn c="bg-[#e8f2e0]" />
        </div>
        <span className="ml-auto mr-[58px] mt-[2px] text-[12px] leading-none text-white font-['Liberation_Sans',sans-serif]">14:13</span>
        <div className="w-[14px] h-[8px] border-l border-[#5f7690] bg-[#8aa0ba] shrink-0" />
      </div>
      <Gauge />
    </div>
  );
}
